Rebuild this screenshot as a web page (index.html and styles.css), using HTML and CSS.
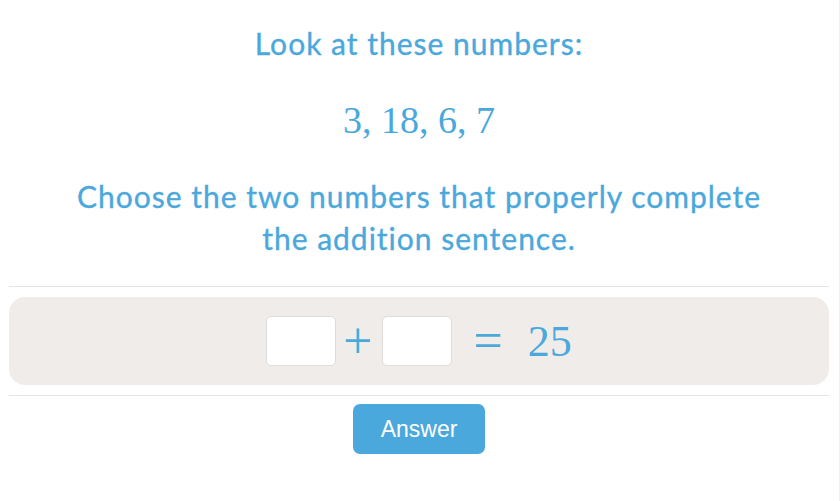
FILE: index.html
```html
<!DOCTYPE html>
<html>
<head>
<meta charset="utf-8">
<link rel="stylesheet" href="styles.css">
</head>
<body>
<div class="page">
  <div class="question">
    <p class="prompt">Look at these numbers:</p>
    <p class="numbers">3, 18, 6, 7</p>
    <p class="instruction">Choose the two numbers that properly complete<br>the addition sentence.</p>
  </div>
  <hr class="rule">
  <div class="equation">
    <span class="slot"></span>
    <span class="op plus">+</span>
    <span class="slot"></span>
    <span class="op eq">=</span>
    <span class="result">25</span>
  </div>
  <hr class="rule">
  <div class="actions">
    <button class="answer">Answer</button>
  </div>
</div>
</body>
</html>
```
FILE: styles.css
```css
html, body {
  margin: 0;
  padding: 0;
  background: #ffffff;
}
body {
  width: 840px;
  height: 501px;
  overflow: hidden;
}
.page {
  width: 820px;
  margin-left: 9px;
  padding-right: 10px;
  border-right: 1px solid #f0f0f0;
  height: 501px;
  box-sizing: content-box;
}
.question {
  text-align: center;
  color: #4aa8dc;
  padding-top: 22px;
}
.question p {
  margin: 0;
}
.prompt {
  font-family: Lato, "Noto Sans", sans-serif;
  font-size: 30px;
  letter-spacing: 1px;
  -webkit-text-stroke: 0.35px #4aa8dc;
  line-height: 42px;
}
.numbers {
  font-family: "Liberation Serif", "Times New Roman", serif;
  font-size: 38px;
  line-height: 44px;
  margin-top: 34px !important;
}
.instruction {
  font-family: Lato, "Noto Sans", sans-serif;
  font-size: 30px;
  letter-spacing: 1px;
  -webkit-text-stroke: 0.35px #4aa8dc;
  line-height: 42px;
  margin-top: 33px !important;
}
.rule {
  border: 0;
  border-top: 1px solid #e4e4e4;
  margin: 0;
  height: 0;
}
.question + .rule {
  margin-top: 27px;
}
.equation {
  margin-top: 10px;
  height: 88px;
  background: #f0ece9;
  border-radius: 16px;
  display: flex;
  align-items: center;
  justify-content: center;
  box-sizing: border-box;
  color: #4aa8dc;
  font-family: "Liberation Serif", "Times New Roman", serif;
  font-size: 44px;
  margin-bottom: 10px;
}
.slot {
  width: 68px;
  height: 48px;
  background: #ffffff;
  border: 1px solid #dcdcdc;
  border-radius: 5px;
}
.op {
  line-height: 1;
  font-size: 52px;
}
.plus {
  margin: 0 9px 0 7px;
}
.eq {
  margin: 0 25px 0 22px;
}
.result {
  line-height: 1;
  position: relative;
  top: 1px;
}
.actions {
  display: flex;
  justify-content: center;
  padding-top: 8px;
}
.answer {
  width: 132px;
  height: 50px;
  border: 0;
  border-radius: 7px;
  background: #4aa8dc;
  color: #ffffff;
  font-family: "Liberation Sans", Arial, sans-serif;
  font-size: 23px;
  cursor: pointer;
}
```
